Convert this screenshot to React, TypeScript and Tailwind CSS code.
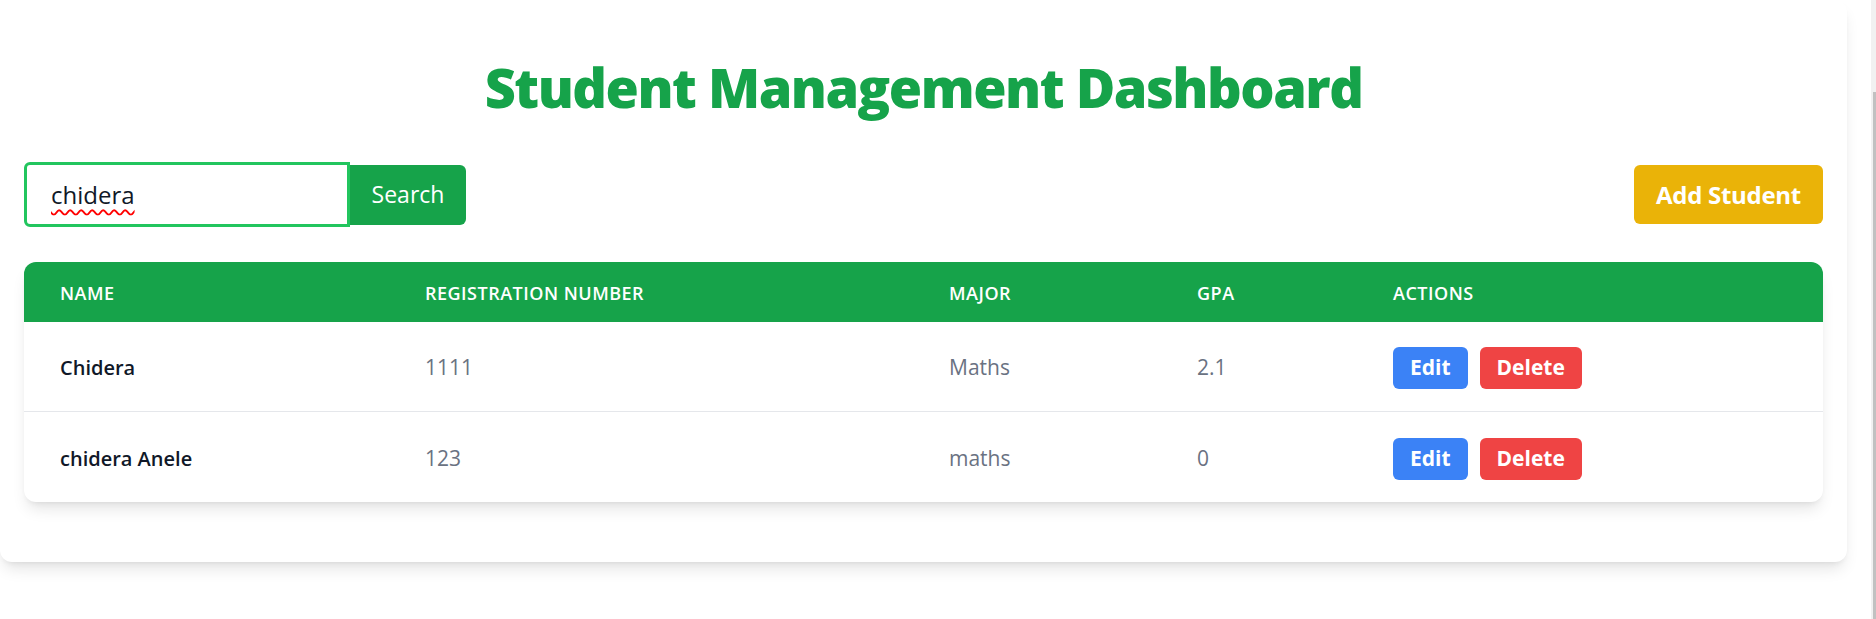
const students = [
    { name: "Chidera", reg: "1111", major: "Maths", gpa: "2.1" },
    { name: "chidera Anele", reg: "123", major: "maths", gpa: "0" },
];

const cols = "grid grid-cols-[365px_524px_248px_196px_1fr] items-center";

const App = () => {
    return (
        <div className="flex min-h-[619px] bg-white font-['Open_Sans',sans-serif]">
            <div className="w-[1847px] shrink-0 self-start rounded-b-[12px] rounded-tr-[12px] bg-white px-[24px] pt-[57px] pb-[60px] shadow-lg">
                <h1 className="text-center text-[54px] leading-[60px] font-extrabold tracking-[-1.5px] text-[#16a34a]">
                    Student Management Dashboard
                </h1>

                <div className="mt-[45px] flex items-center justify-between">
                    <div className="flex items-center">
                        <div className="flex h-[65px] w-[326px] items-center rounded-l-[6px] border-[3px] border-[#22c55e] px-[24px] text-[24px] text-gray-900">
                            <span className="underline decoration-[#ff0000] decoration-wavy decoration-[1.5px] underline-offset-[5px]">chidera</span>
                        </div>
                        <button className="h-[60px] w-[116px] rounded-r-[6px] bg-[#16a34a] text-[23px] text-white">
                            Search
                        </button>
                    </div>
                    <button className="h-[59px] w-[189px] rounded-[6px] bg-[#eab308] text-[24px] font-bold tracking-[-0.3px] text-white">
                        Add Student
                    </button>
                </div>

                <div className="mt-[35px] overflow-hidden rounded-[12px] bg-white shadow-lg">
                    <div className={`${cols} h-[60px] bg-[#16a34a] pt-[2px] text-[18px] font-semibold uppercase tracking-[0.5px] text-white`}>
                        <div className="px-[36px]">Name</div>
                        <div className="px-[36px]">Registration Number</div>
                        <div className="px-[36px]">Major</div>
                        <div className="px-[36px]">GPA</div>
                        <div className="px-[36px]">Actions</div>
                    </div>
                    {students.map((s, i) => (
                        <div
                            key={s.reg}
                            className={`${cols} h-[90px] pt-[3px] text-[21px] ${i === 0 ? "border-b border-gray-200" : ""}`}
                        >
                            <div className="px-[36px] text-[20px] font-semibold text-gray-900">{s.name}</div>
                            <div className="px-[36px] text-gray-500">{s.reg}</div>
                            <div className="px-[36px] text-gray-500">{s.major}</div>
                            <div className="px-[36px] text-gray-500">{s.gpa}</div>
                            <div className="flex gap-[12px] px-[36px]">
                                <button className="h-[42px] rounded-[6px] bg-[#3b82f6] px-[17px] text-[21px] font-bold text-white">
                                    Edit
                                </button>
                                <button className="h-[42px] rounded-[6px] bg-[#ef4444] px-[17px] text-[21px] font-bold text-white">
                                    Delete
                                </button>
                            </div>
                        </div>
                    ))}
                </div>
            </div>

            <div className="flex-1" />

            <div className="flex w-[5px] bg-[#f1f1f1] pt-[92px] pl-[2px]">
                <div className="w-full bg-[#c1c1c1]" />
            </div>
        </div>
    );
};

export default App;
